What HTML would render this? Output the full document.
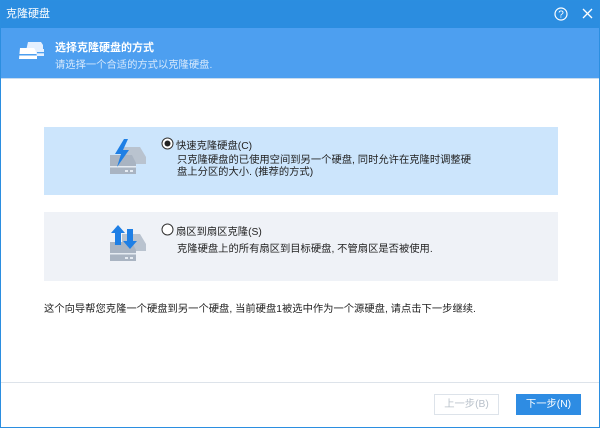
<!DOCTYPE html>
<html><head><meta charset="utf-8"><style>
*{margin:0;padding:0;box-sizing:border-box}
body{width:600px;height:428px;overflow:hidden;background:#fff;font-family:"Liberation Sans","Noto Sans CJK SC",sans-serif;font-size:10.3px;color:#222;position:relative}
.win{position:absolute;left:0;top:0;width:600px;height:428px;border:1px solid #2b8ee0}
.title{position:absolute;left:0;top:0;width:600px;height:28px;background:#2b8de0;color:#fff;font-size:11px;line-height:28px;padding-left:6px}
.hdr{position:absolute;left:0;top:28px;width:600px;height:50px;background:#4d9ff0;color:#fff}
.box{position:absolute;left:44px;width:514px}
.t{position:absolute;white-space:nowrap}
.btn{position:absolute;top:394px;width:65px;height:21px;font-size:10.3px;text-align:center;line-height:19px}
</style></head><body>
<div class="title">克隆硬盘</div>
<svg style="position:absolute;left:554px;top:7px" width="14" height="14" viewBox="0 0 14 14"><circle cx="7" cy="7" r="6" fill="none" stroke="#fff" stroke-width="1.2"/><text x="7" y="10.5" font-size="10" fill="#fff" text-anchor="middle" font-family="Liberation Sans">?</text></svg>
<svg style="position:absolute;left:582px;top:8px" width="11" height="11"><path d="M1 1L10 10M10 1L1 10" stroke="#fff" stroke-width="1.3"/></svg>
<div class="hdr">
<svg style="position:absolute;left:18px;top:13px" width="30" height="22" viewBox="0 0 30 22"><path d="M10 1h13l2 3v6H8z" fill="#e4f0ff"/><path d="M2 7h14l3 4v7H1z" fill="#fff"/><rect x="1" y="13" width="18" height="1.5" fill="#4d9ff0"/><path d="M17 8h9v7h-7z" fill="#e4f0ff"/><rect x="19" y="11" width="7" height="1.3" fill="#4d9ff0"/></svg>
<div class="t" style="left:55px;top:11px;font-weight:bold;font-size:11px">选择克隆硬盘的方式</div>
<div class="t" style="left:55px;top:28px;color:#d7e9fc">请选择一个合适的方式以克隆硬盘.</div>
</div>
<div style="position:absolute;left:0;top:78px;width:600px;height:1px;background:#c9dcef"></div>
<div class="box" style="top:127px;height:68px;background:#cce5fc"></div>
<div class="box" style="top:212px;height:69px;background:#eff2f7"></div>
<svg style="position:absolute;left:108px;top:138px" width="42" height="40" viewBox="0 0 42 40"><path d="M14 9h18l6 10v7H14z" fill="#b9c3cf"/><path d="M2 17h22l4 8v11H2z" fill="#a9b4c2"/><rect x="2" y="28" width="26" height="1.5" fill="#e5ebf2"/><rect x="17" y="32" width="3" height="2" fill="#e5ebf2"/><rect x="22" y="32" width="3" height="2" fill="#e5ebf2"/><path d="M16 1L7 16h6l-4 13 12-17h-6l5-11z" fill="#1e7fe5"/></svg>
<svg style="position:absolute;left:108px;top:222px" width="42" height="42" viewBox="0 0 42 42"><path d="M14 12h18l6 10v7H14z" fill="#b9c3cf"/><path d="M2 20h22l4 8v11H2z" fill="#a9b4c2"/><rect x="2" y="31" width="26" height="1.5" fill="#e5ebf2"/><rect x="17" y="35" width="3" height="2" fill="#e5ebf2"/><rect x="22" y="35" width="3" height="2" fill="#e5ebf2"/><path d="M10 3l-7 8h4v12h6V11h4z" fill="#1e7fe5"/><path d="M22 27l7-8h-4V7h-6v12h-4z" fill="#1e7fe5"/></svg>
<svg style="position:absolute;left:161px;top:137px" width="13" height="13"><circle cx="6.5" cy="6.5" r="5.5" fill="#fff" stroke="#333"/><circle cx="6.5" cy="6.5" r="3" fill="#222"/></svg>
<div class="t" style="left:176px;top:137px">快速克隆硬盘(C)</div>
<div class="t" style="left:177px;top:155px;line-height:12px">只克隆硬盘的已使用空间到另一个硬盘, 同时允许在克隆时调整硬<br>盘上分区的大小. (推荐的方式)</div>
<svg style="position:absolute;left:161px;top:223px" width="13" height="13"><circle cx="6.5" cy="6.5" r="5.5" fill="#fff" stroke="#333"/></svg>
<div class="t" style="left:176px;top:223px">扇区到扇区克隆(S)</div>
<div class="t" style="left:177px;top:240px">克隆硬盘上的所有扇区到目标硬盘, 不管扇区是否被使用.</div>
<div class="t" style="left:44px;top:300px">这个向导帮您克隆一个硬盘到另一个硬盘, 当前硬盘1被选中作为一个源硬盘, 请点击下一步继续.</div>
<div style="position:absolute;left:0;top:382px;width:600px;height:1px;background:#dde3ea"></div>
<div class="btn" style="left:434px;border:1px solid #dde3ea;color:#b8c0ca">上一步(B)</div>
<div class="btn" style="left:516px;background:#2e8ce3;color:#fff;line-height:21px">下一步(N)</div>
<div class="win"></div>
</body></html>
